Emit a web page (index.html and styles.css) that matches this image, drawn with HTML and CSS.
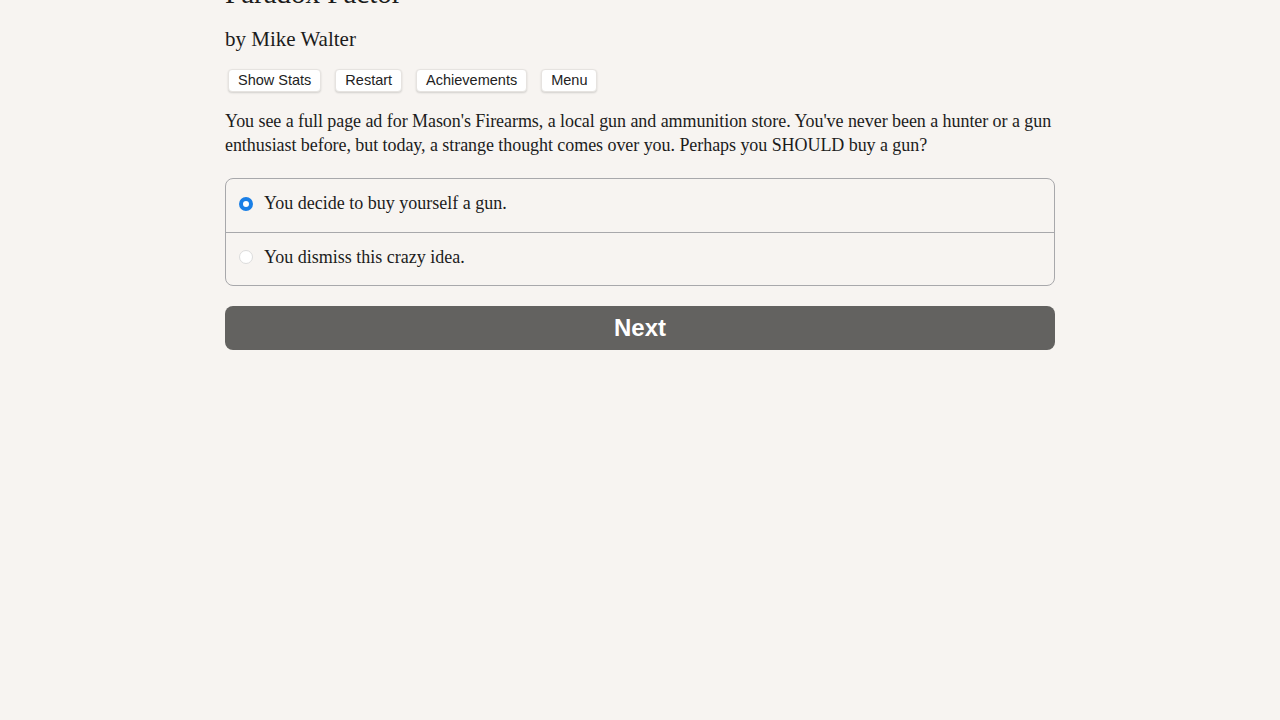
FILE: index.html
```html
<!DOCTYPE html>
<html>
<head>
<meta charset="utf-8">
<link rel="stylesheet" href="styles.css">
</head>
<body>
<div class="page">
  <h1 class="title">Paradox Factor</h1>
  <h2 class="author">by Mike Walter</h2>
  <div class="toolbar">
    <button class="tool">Show Stats</button>
    <button class="tool">Restart</button>
    <button class="tool">Achievements</button>
    <button class="tool">Menu</button>
  </div>
  <p class="text">You see a full page ad for Mason's Firearms, a local gun and ammunition store. You've never been a hunter or a gun enthusiast before, but today, a strange thought comes over you. Perhaps you SHOULD buy a gun?</p>
  <div class="choices">
    <label class="choice"><span class="radio checked"></span>You decide to buy yourself a gun.</label>
    <label class="choice"><span class="radio"></span>You dismiss this crazy idea.</label>
  </div>
  <button class="next">Next</button>
</div>
</body>
</html>
```
FILE: styles.css
```css
html, body {
  margin: 0;
  padding: 0;
  background: #f7f4f1;
}
body {
  font-family: "Liberation Serif", "Times New Roman", serif;
  color: #1c1c1c;
}
.page {
  width: 830px;
  margin: 0 auto;
  display: flex;
  flex-direction: column;
}
.title {
  margin: -24px 0 0 0;
  font-size: 29px;
  line-height: 34px;
  font-weight: normal;
}
.author {
  margin: 16px 0 0 0;
  font-size: 21px;
  line-height: 26px;
  font-weight: normal;
}
.toolbar {
  display: flex;
  gap: 14px;
  margin: 17px 0 0 3px;
}
.tool {
  font-family: "Liberation Sans", Arial, sans-serif;
  font-size: 14.5px;
  line-height: 17px;
  color: #222;
  background: #fff;
  border: 1px solid #e6e3e0;
  border-radius: 4px;
  padding: 2px 9px;
  box-shadow: 0 1px 2px rgba(0,0,0,0.15);
}
.text {
  margin: 17px 0 0 0;
  font-size: 18px;
  line-height: 24px;
  letter-spacing: -0.06px;
}
.choices {
  margin-top: 21px;
  border: 1px solid #a8a8ab;
  border-radius: 8px;
  display: flex;
  flex-direction: column;
}
.choice {
  display: flex;
  align-items: center;
  height: 53px;
  padding: 0 0 4px 13px;
  font-size: 18px;
  box-sizing: border-box;
}
.choice + .choice {
  border-top: 1px solid #a8a8ab;
}
.radio {
  width: 14px;
  height: 14px;
  border-radius: 50%;
  background: #fff;
  border: 1px solid #dcdcdc;
  box-sizing: border-box;
  margin-right: 11px;
  flex: none;
}
.radio.checked {
  border: 4px solid #1a7fe6;
  background: #fff;
}
.next {
  margin-top: 20px;
  height: 44px;
  border: none;
  border-radius: 8px;
  background: #636260;
  color: #fff;
  font-family: "Liberation Sans", Arial, sans-serif;
  font-weight: bold;
  font-size: 24px;
}
```
